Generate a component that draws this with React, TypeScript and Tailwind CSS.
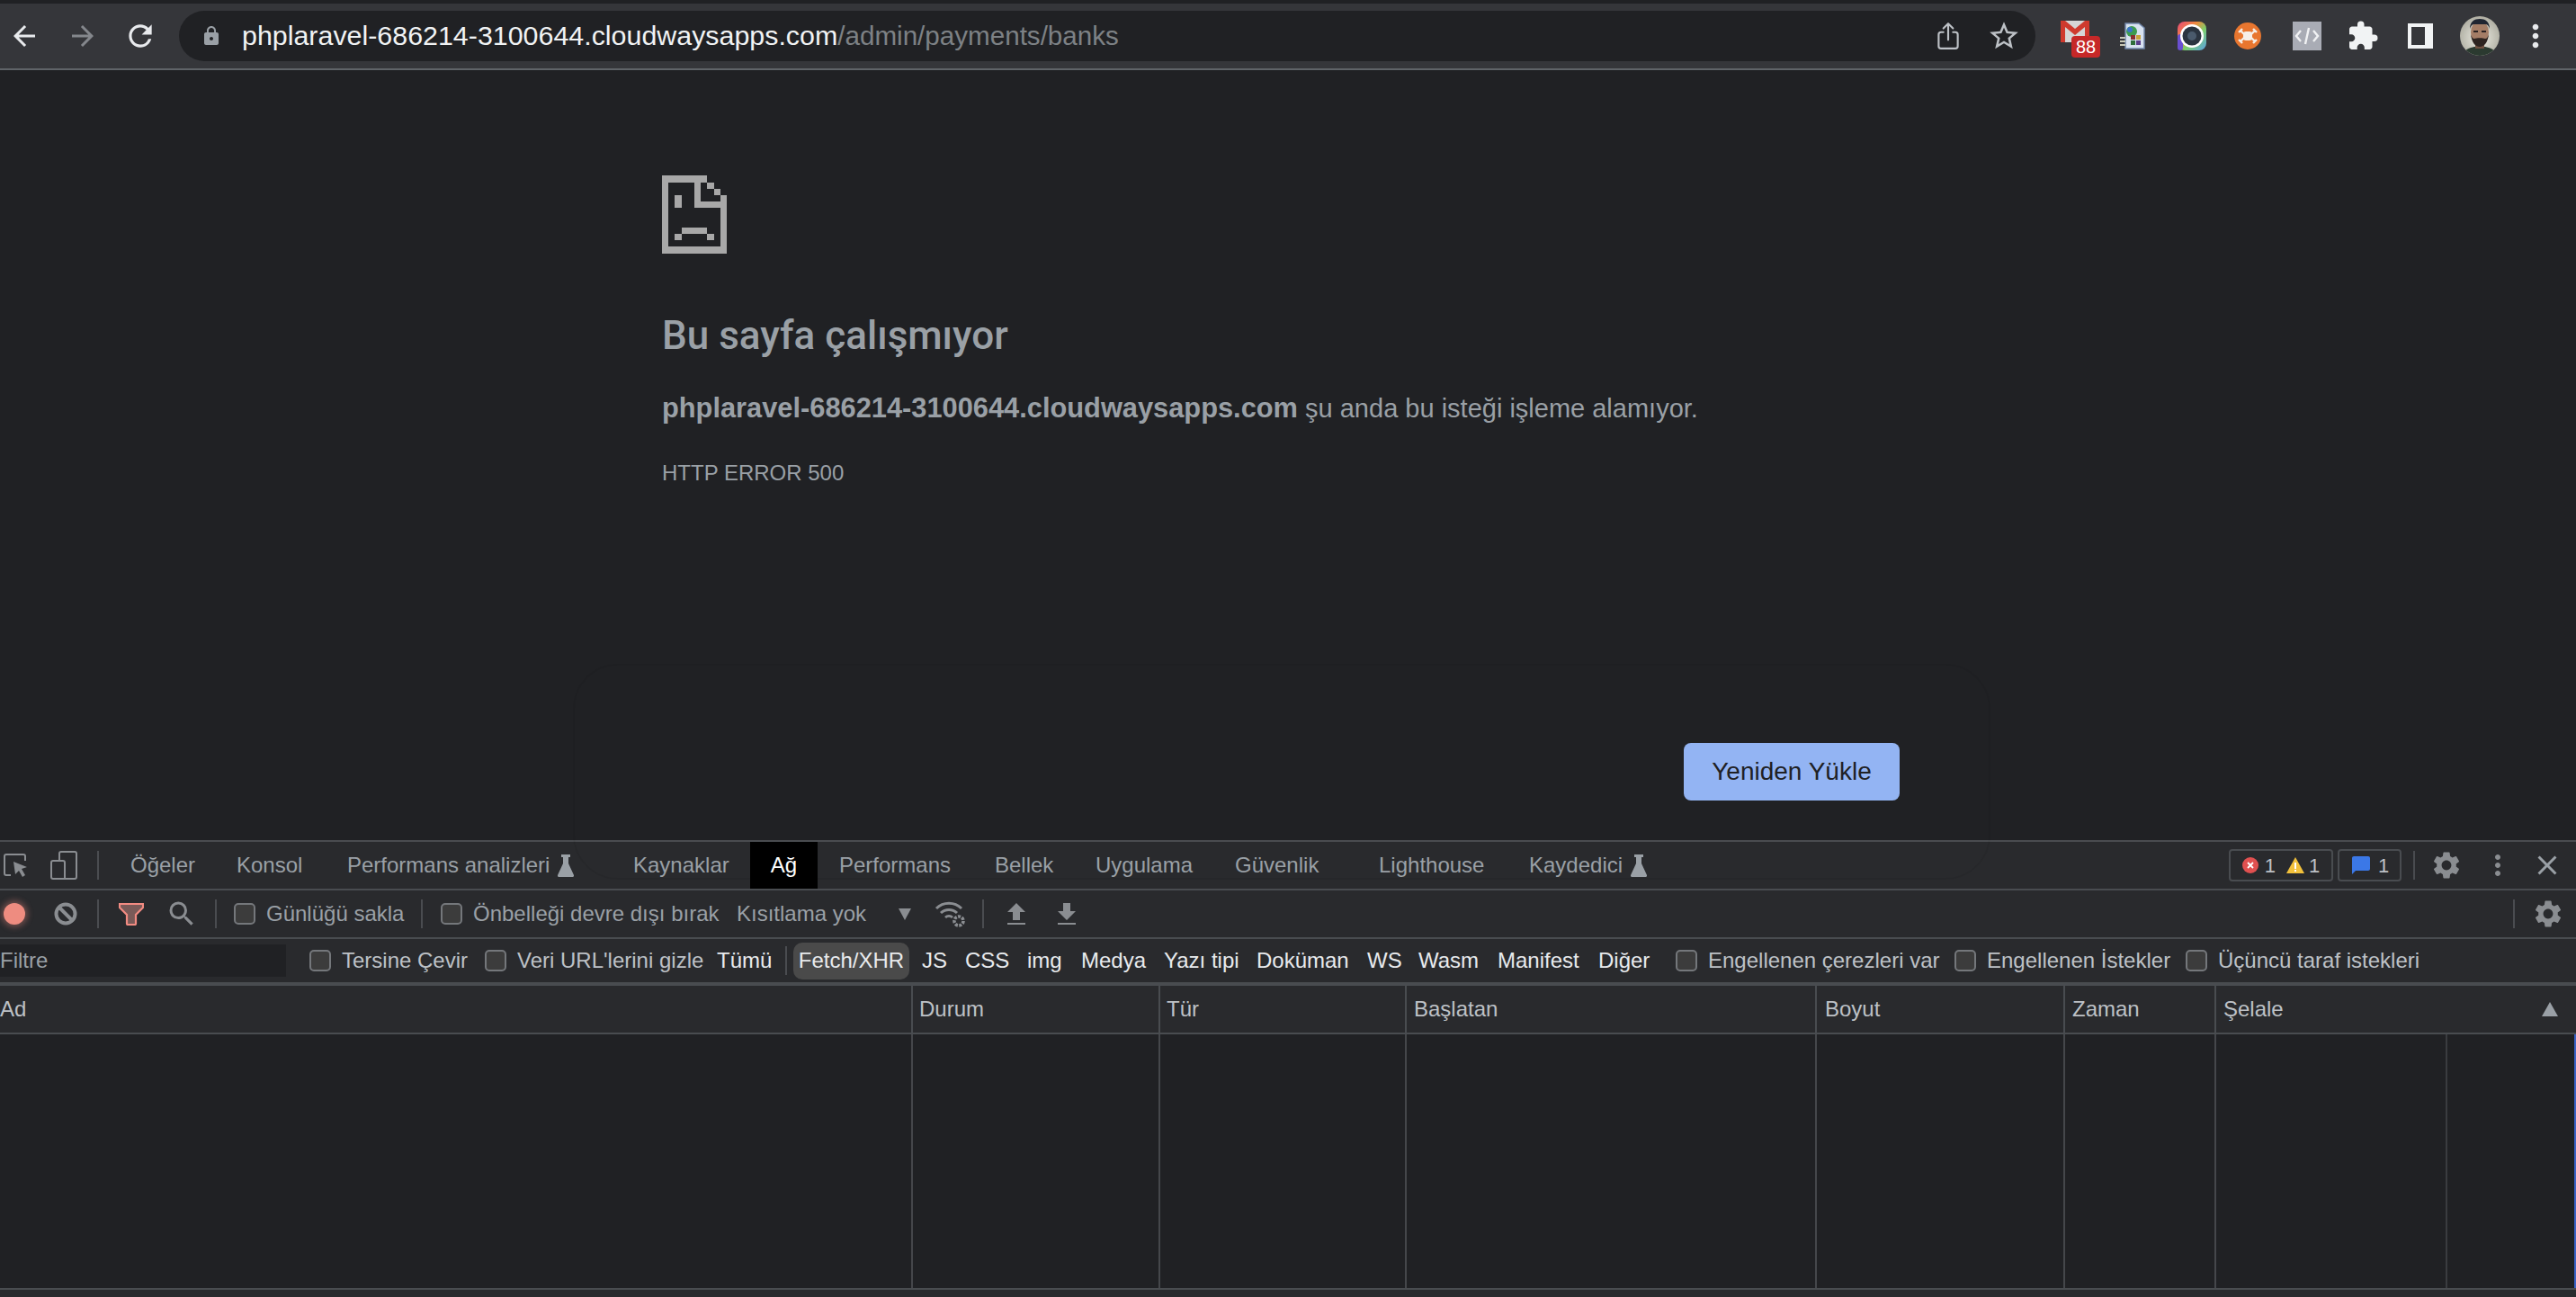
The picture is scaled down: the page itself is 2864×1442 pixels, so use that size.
import React from 'react';
import { MdArrowBack, MdArrowForward, MdRefresh, MdLock, MdStarBorder, MdExtension, MdMoreVert, MdSettings, MdClose, MdSearch, MdChatBubble } from 'react-icons/md';
import { IoShareOutline } from 'react-icons/io5';

// pixels of the sad page, [col, row, width, height] on a 10x12 grid
const sadPixels = [
  [0, 0, 7, 1], [0, 1, 1, 10], [0, 11, 10, 1], [9, 3, 1, 8],
  [5, 1, 1, 4], [6, 4, 3, 1], [7, 1, 1, 1], [8, 2, 1, 1],
  [2, 3, 1, 2], [3, 8, 4, 1], [2, 9, 1, 1], [7, 9, 1, 1],
];

function SadPage() {
  return (
    <svg viewBox="0 0 10 12" className="w-[72px] h-[87px] block" shapeRendering="crispEdges">
      {sadPixels.map(([x, y, w, h], i) => (
        <rect key={i} x={x} y={y} width={w} height={h} fill="#a8a8a8" />
      ))}
    </svg>
  );
}

function Flask() {
  return (
    <svg viewBox="0 0 18 26" className="w-[18px] h-[26px] ml-[9px] shrink-0">
      <path d="M4 1h10v3h-2v7l6 13a1.4 1.4 0 0 1-1.3 2H1.3A1.4 1.4 0 0 1 0 24l6-13V4H4z" fill="#9aa0a6" />
    </svg>
  );
}

function Check({ label, className }: { label: string; className: string }) {
  return (
    <div className={`flex items-center shrink-0 ${className}`}>
      <span className="w-[24px] h-[24px] rounded-[5px] border-2 border-[#74777b] bg-[#3c3c3c] shrink-0" />
      <span className="ml-[12px] whitespace-nowrap">{label}</span>
    </div>
  );
}

function Divider({ className }: { className: string }) {
  return <span className={`w-[2px] h-[32px] bg-[#4a4c50] shrink-0 ${className}`} />;
}

function Avatar() {
  return (
    <svg viewBox="0 0 44 44" className="w-[44px] h-[44px] ml-[30px]">
      <defs>
        <clipPath id="av"><circle cx="22" cy="22" r="22" /></clipPath>
        <radialGradient id="wall" cx="0.5" cy="0.55" r="0.6">
          <stop offset="0" stopColor="#efefe6" />
          <stop offset="1" stopColor="#a9a89c" />
        </radialGradient>
      </defs>
      <g clipPath="url(#av)">
        <rect width="44" height="44" fill="url(#wall)" />
        <path d="M3 44c1-7 8-9 13-10h12c5 1 12 3 13 10z" fill="#2b3a30" />
        <rect x="17" y="27" width="10" height="9" fill="#6f5040" />
        <ellipse cx="22" cy="18" rx="10" ry="13" fill="#a47d66" />
        <path d="M11 14c0-8 5-11 11-11s11 3 11 11c-1-3-2-5-5-5H16c-3 0-4 2-5 5z" fill="#1f2430" />
        <path d="M12 20c1 9 5 14 10 14s9-5 10-14c-1 3-2 5-4 5-2-1-10-1-12 0-2 0-3-2-4-5z" fill="#2d2420" />
        <rect x="15" y="16" width="5" height="2" fill="#2a2222" />
        <rect x="24" y="16" width="5" height="2" fill="#2a2222" />
      </g>
    </svg>
  );
}

function ChromeBar() {
  return (
    <div className="h-[74px] shrink-0 bg-[#35363a] border-b-2 border-[#5f6368] flex items-center">
      <MdArrowBack className="text-[#e8eaed] text-[36px] ml-[9px] shrink-0" />
      <MdArrowForward className="text-[#84878c] text-[36px] ml-[29px] shrink-0" />
      <MdRefresh className="text-[#e8eaed] text-[38px] ml-[27px] shrink-0" />
      <div className="ml-[24px] w-[2064px] h-[56px] rounded-full bg-[#202124] flex items-center shrink-0">
        <MdLock className="text-[#9aa0a6] text-[24px] ml-[24px] shrink-0" />
        <span className="ml-[22px] text-[30.4px] text-[#f1f3f4] whitespace-nowrap">
          phplaravel-686214-3100644.cloudwaysapps.com<span className="text-[29.6px] text-[#7d8185]">/admin/payments/banks</span>
        </span>
        <IoShareOutline className="text-[#bdc1c6] text-[34px] ml-auto shrink-0" />
        <MdStarBorder className="text-[#bdc1c6] text-[38px] ml-[26px] mr-[16px] shrink-0" />
      </div>
      {/* gmail */}
      <div className="relative w-[32px] h-[24px] ml-[28px] shrink-0 -mt-[10px]">
        <svg viewBox="0 0 32 24" className="w-[32px] h-[24px] block">
          <rect width="32" height="24" fill="#d6d6d6" />
          <path d="M0 0h5l11 9L27 0h5v24h-5V7L16 16 5 7v17H0z" fill="#cf3a2e" />
        </svg>
        <span className="absolute left-[12px] top-[17px] w-[32px] h-[24px] rounded-[4px] bg-[#c62828] text-white text-[20px] leading-[24px] text-center">88</span>
      </div>
      {/* doc extension */}
      <svg viewBox="0 0 28 30" className="w-[28px] h-[30px] ml-[34px] shrink-0">
        <path d="M6 1h15l6 5v23H6z" fill="#d8e2f0" stroke="#7086a8" strokeWidth="1.5" />
        <circle cx="13" cy="10" r="6" fill="#3d9b4f" />
        <circle cx="11" cy="8" r="3" fill="#3b73c8" />
        <rect x="12" y="14" width="5" height="5" fill="#8a2f2f" />
        <rect x="18" y="14" width="5" height="5" fill="#c9a23a" />
        <rect x="12" y="20" width="5" height="5" fill="#2f6d3a" />
        <rect x="18" y="20" width="5" height="5" fill="#5a3d8a" />
        <rect x="0" y="16" width="6" height="2" fill="#c9c9b8" />
        <rect x="0" y="20" width="6" height="2" fill="#c9c9b8" />
        <rect x="0" y="24" width="6" height="2" fill="#c9c9b8" />
      </svg>
      {/* camera */}
      <svg viewBox="0 0 32 32" className="w-[32px] h-[32px] ml-[36px] shrink-0">
        <defs>
          <linearGradient id="cam" x1="0" y1="0" x2="1" y2="1">
            <stop offset="0" stopColor="#e8467c" />
            <stop offset="0.35" stopColor="#f08a3c" />
            <stop offset="0.6" stopColor="#7ccf6a" />
            <stop offset="1" stopColor="#5aa0e8" />
          </linearGradient>
        </defs>
        <rect width="32" height="32" rx="8" fill="url(#cam)" />
        <rect x="0" y="14" width="6" height="18" rx="3" fill="#6a4fd0" />
        <circle cx="16" cy="16" r="13" fill="#ffffff" />
        <circle cx="16" cy="16" r="10.5" fill="#2b3440" />
        <circle cx="16" cy="16" r="5" fill="#4a5a6c" />
      </svg>
      {/* orange */}
      <svg viewBox="0 0 30 30" className="w-[30px] h-[30px] ml-[31px] shrink-0">
        <circle cx="15" cy="15" r="15" fill="#e8762f" />
        <rect x="10" y="10" width="10" height="10" rx="3" fill="#f6efe8" />
        <path d="M7 9l4 4M23 9l-4 4M7 21l4-4M23 21l-4-4M5 11l4-4M25 11l-4-4M5 19l4 4M25 19l-4 4" stroke="#f6efe8" strokeWidth="2.4" />
      </svg>
      {/* code */}
      <svg viewBox="0 0 32 32" className="w-[32px] h-[32px] ml-[35px] shrink-0">
        <rect width="32" height="32" fill="#a9acb5" />
        <path d="M9 10l-5 6 5 6M23 10l5 6-5 6M18 7l-4 18" fill="none" stroke="#f1f2f4" strokeWidth="2.4" />
      </svg>
      <MdExtension className="text-[#f1f3f4] text-[36px] ml-[28px] shrink-0" />
      {/* side panel */}
      <div className="ml-[32px] w-[28px] h-[28px] bg-[#f1f3f4] shrink-0 flex">
        <span className="ml-[4px] mt-[4px] w-[15px] h-[20px] bg-[#35363a]" />
      </div>
      <Avatar />
      <MdMoreVert className="text-[#e8eaed] text-[40px] ml-[20px] shrink-0" />
    </div>
  );
}

function ErrorPage() {
  return (
    <div className="relative h-[856px] shrink-0 bg-[#202124] pl-[736px] pt-[117px]">
      <div className="absolute left-[637px] top-[660px] w-[1576px] h-[240px] rounded-[50px] border-2 border-black/[0.05]" />
      <div className="relative w-[1376px]">
        <SadPage />
        <h1 className="mt-[63px] text-[44px] leading-[56px] font-medium text-[#9aa0a6] [font-family:Roboto,sans-serif]">Bu sayfa çalışmıyor</h1>
        <p className="mt-[33px] text-[29px] leading-[40px] text-[#9aa0a6]">
          <b className="text-[30.8px]">phplaravel-686214-3100644.cloudwaysapps.com</b> şu anda bu isteği işleme alamıyor.
        </p>
        <div className="mt-[38px] text-[24px] leading-[28px] text-[#9aa0a6]">HTTP ERROR 500</div>
        <div className="mt-[286px] flex justify-end">
          <button className="w-[240px] h-[64px] rounded-[8px] bg-[#93b4f3] text-[#202124] text-[28px]">Yeniden Yükle</button>
        </div>
      </div>
    </div>
  );
}

function TabsRow() {
  return (
    <div className="h-[54px] shrink-0 bg-[#292a2d] border-b-2 border-[#494c50] flex items-center text-[24px] text-[#9aa0a6]">
      <svg viewBox="0 0 26 26" className="w-[26px] h-[26px] ml-[4px] shrink-0">
        <path d="M8 24H3a2 2 0 0 1-2-2V3a2 2 0 0 1 2-2h19a2 2 0 0 1 2 2v5" fill="none" stroke="#8a8d91" strokeWidth="2" />
        <path d="M11 9l15 6-6 2 4 7-3 2-4-7-4 4z" fill="#8a8d91" />
      </svg>
      <svg viewBox="0 0 30 32" className="w-[30px] h-[32px] ml-[26px] shrink-0">
        <path d="M10 11V3a2 2 0 0 1 2-2h15a2 2 0 0 1 2 2v26a2 2 0 0 1-2 2H3a2 2 0 0 1-2-2V13a2 2 0 0 1 2-2h11a2 2 0 0 1 2 2v18" fill="none" stroke="#8a8d91" strokeWidth="2" />
      </svg>
      <Divider className="ml-[22px]" />
      <span className="ml-[35px] w-[118px] shrink-0">Öğeler</span>
      <span className="w-[123px] shrink-0">Konsol</span>
      <span className="w-[318px] shrink-0 flex items-center whitespace-nowrap">Performans analizleri<Flask /></span>
      <span className="w-[130px] shrink-0">Kaynaklar</span>
      <span className="w-[75px] h-[52px] bg-black text-white flex items-center justify-center shrink-0">Ağ</span>
      <span className="ml-[24px] w-[173px] shrink-0">Performans</span>
      <span className="w-[112px] shrink-0">Bellek</span>
      <span className="w-[155px] shrink-0">Uygulama</span>
      <span className="w-[160px] shrink-0">Güvenlik</span>
      <span className="w-[167px] shrink-0">Lighthouse</span>
      <span className="shrink-0 flex items-center">Kaydedici<Flask /></span>
      <div className="ml-auto w-[116px] flex items-center justify-center h-[36px] rounded-[4px] border-2 border-[#494c50] text-[#bdc1c6] text-[22px] shrink-0">
        <svg viewBox="0 0 18 18" className="w-[18px] h-[18px]">
          <circle cx="9" cy="9" r="9" fill="#e05050" />
          <path d="M6 6l6 6M12 6l-6 6" stroke="#fff" strokeWidth="1.8" />
        </svg>
        <span className="ml-[7px]">1</span>
        <svg viewBox="0 0 20 18" className="w-[20px] h-[18px] ml-[12px]">
          <path d="M10 0l10 18H0z" fill="#f2c13c" />
          <rect x="9" y="6" width="2" height="7" fill="#fff" />
          <rect x="9" y="14" width="2" height="2" fill="#fff" />
        </svg>
        <span className="ml-[5px]">1</span>
      </div>
      <div className="ml-[5px] w-[71px] flex items-center justify-center h-[36px] rounded-[4px] border-2 border-[#494c50] text-[#bdc1c6] text-[22px] shrink-0">
        <MdChatBubble className="text-[#3b78e7] text-[24px]" />
        <span className="ml-[7px]">1</span>
      </div>
      <Divider className="ml-[13px]" />
      <MdSettings className="text-[#8a8d91] text-[36px] ml-[17px] shrink-0" />
      <MdMoreVert className="text-[#8a8d91] text-[36px] ml-[21px] shrink-0" />
      <MdClose className="text-[#9aa0a6] text-[36px] ml-[19px] mr-[14px] shrink-0" />
    </div>
  );
}

function ToolbarRow() {
  return (
    <div className="h-[54px] shrink-0 bg-[#292a2d] border-b-2 border-[#494c50] flex items-center text-[24px] text-[#9aa0a6]">
      <span className="ml-[4px] w-[24px] h-[24px] rounded-full bg-[#ee8c80] shadow-[0_0_6px_3px_rgba(238,140,128,0.35)] shrink-0" />
      <svg viewBox="0 0 26 26" className="w-[26px] h-[26px] ml-[32px] shrink-0">
        <circle cx="13" cy="13" r="10.5" fill="none" stroke="#8a8d91" strokeWidth="4" />
        <path d="M6 6l14 14" stroke="#8a8d91" strokeWidth="4" />
      </svg>
      <Divider className="ml-[22px]" />
      <svg viewBox="0 0 28 26" className="w-[28px] h-[26px] ml-[22px] shrink-0">
        <path d="M1 2h26v4l-8 8v10a1 1 0 0 1-1 1h-8a1 1 0 0 1-1-1V14L1 6z" fill="#7a5a58" stroke="#f28b82" strokeWidth="2.2" />
      </svg>
      <MdSearch className="text-[#8a8d91] text-[36px] ml-[24px] shrink-0" />
      <Divider className="ml-[19px]" />
      <Check label="Günlüğü sakla" className="ml-[19px] w-[208px] text-[#9aa0a6]" />
      <Divider />
      <Check label="Önbelleği devre dışı bırak" className="ml-[20px] w-[329px] text-[#9aa0a6]" />
      <span className="whitespace-nowrap w-[180px] shrink-0">Kısıtlama yok</span>
      <span className="w-0 h-0 border-x-[7px] border-x-transparent border-t-[13px] border-t-[#8a8d91] shrink-0" />
      <svg viewBox="0 0 36 32" className="w-[36px] h-[32px] ml-[26px] shrink-0">
        <path d="M2 10a20 20 0 0 1 28 0M7 15a13 13 0 0 1 18 0M12 20a6 6 0 0 1 8 0" fill="none" stroke="#8a8d91" strokeWidth="3" />
        <circle cx="27" cy="24" r="5" fill="none" stroke="#8a8d91" strokeWidth="3.6" strokeDasharray="3 1.4" />
      </svg>
      <Divider className="ml-[17px]" />
      <svg viewBox="0 0 20 24" className="w-[20px] h-[24px] ml-[26px] shrink-0">
        <path d="M10 0l10 10h-6v9H6v-9H0zM0 22h20v2H0z" fill="#8a8d91" />
      </svg>
      <svg viewBox="0 0 20 24" className="w-[20px] h-[24px] ml-[36px] shrink-0">
        <path d="M10 19L0 9h6V0h8v9h6zM0 22h20v2H0z" fill="#8a8d91" />
      </svg>
      <Divider className="ml-auto" />
      <MdSettings className="text-[#8a8d91] text-[36px] ml-[19px] mr-[13px] shrink-0" />
    </div>
  );
}

function FilterRow() {
  return (
    <div className="h-[52px] shrink-0 bg-[#292a2d] border-b-4 border-[#494c50] flex items-center text-[24px] text-[#bdc1c6]">
      <div className="w-[318px] h-[36px] bg-[#202124] text-[#9aa0a6] flex items-center shrink-0">Filtre</div>
      <Check label="Tersine Çevir" className="ml-[26px] w-[195px]" />
      <Check label="Veri URL'lerini gizle" className="w-[258px]" />
      <div className="text-[#e8eaed] flex items-center">
        <span className="w-[76px] shrink-0">Tümü</span>
        <Divider />
        <span className="ml-[7px] w-[129px] h-[41px] bg-[#4a4a4a] rounded-[10px] flex items-center justify-center shrink-0">Fetch/XHR</span>
        <span className="ml-[14px] w-[48px] shrink-0">JS</span>
        <span className="w-[69px] shrink-0">CSS</span>
        <span className="w-[60px] shrink-0">img</span>
        <span className="w-[92px] shrink-0">Medya</span>
        <span className="w-[103px] shrink-0 whitespace-nowrap">Yazı tipi</span>
        <span className="w-[123px] shrink-0">Doküman</span>
        <span className="w-[57px] shrink-0">WS</span>
        <span className="w-[88px] shrink-0">Wasm</span>
        <span className="w-[112px] shrink-0">Manifest</span>
        <span className="w-[86px] shrink-0">Diğer</span>
      </div>
      <Check label="Engellenen çerezleri var" className="w-[310px]" />
      <Check label="Engellenen İstekler" className="w-[257px]" />
      <Check label="Üçüncü taraf istekleri" className="" />
    </div>
  );
}

function RequestTable() {
  return (
    <div className="flex-1 flex flex-col text-[24px] text-[#bdc1c6]">
      <div className="h-[54px] shrink-0 bg-[#292a2d] border-b-2 border-[#494c50] grid grid-cols-[1013px_275px_274px_456px_276px_168px_1fr]">
        <div className="flex items-center">Ad</div>
        <div className="flex items-center border-l-2 border-[#494c50] pl-[7px]">Durum</div>
        <div className="flex items-center border-l-2 border-[#494c50] pl-[7px]">Tür</div>
        <div className="flex items-center border-l-2 border-[#494c50] pl-[8px]">Başlatan</div>
        <div className="flex items-center border-l-2 border-[#494c50] pl-[9px]">Boyut</div>
        <div className="flex items-center border-l-2 border-[#494c50] pl-[8px]">Zaman</div>
        <div className="flex items-center justify-between border-l-2 border-[#494c50] pl-[8px] pr-[20px]">
          Şelale
          <span className="w-0 h-0 border-x-[9px] border-x-transparent border-b-[16px] border-b-[#9aa0a6]" />
        </div>
      </div>
      <div className="h-[284px] shrink-0 bg-[#202124] border-b-2 border-[#494c50] grid grid-cols-[1013px_275px_274px_456px_276px_168px_257px_1fr_2px]">
        <div />
        <div className="border-l-2 border-[#45474b]" />
        <div className="border-l-2 border-[#45474b]" />
        <div className="border-l-2 border-[#45474b]" />
        <div className="border-l-2 border-[#45474b]" />
        <div className="border-l-2 border-[#45474b]" />
        <div className="border-l-2 border-[#45474b]" />
        <div className="border-l-2 border-[#3a3c40]" />
        <div className="bg-[#3b62c4]" />
      </div>
      <div className="flex-1 bg-[#292a2d]" />
    </div>
  );
}

export default function App() {
  return (
    <div className="w-[2864px] h-[1442px] overflow-hidden flex flex-col bg-[#202124] [font-family:'Liberation_Sans',sans-serif]">
      <div className="h-[4px] shrink-0 bg-[#202124]" />
      <ChromeBar />
      <ErrorPage />
      <div className="h-[2px] shrink-0 bg-[#494c50]" />
      <TabsRow />
      <ToolbarRow />
      <FilterRow />
      <RequestTable />
    </div>
  );
}
